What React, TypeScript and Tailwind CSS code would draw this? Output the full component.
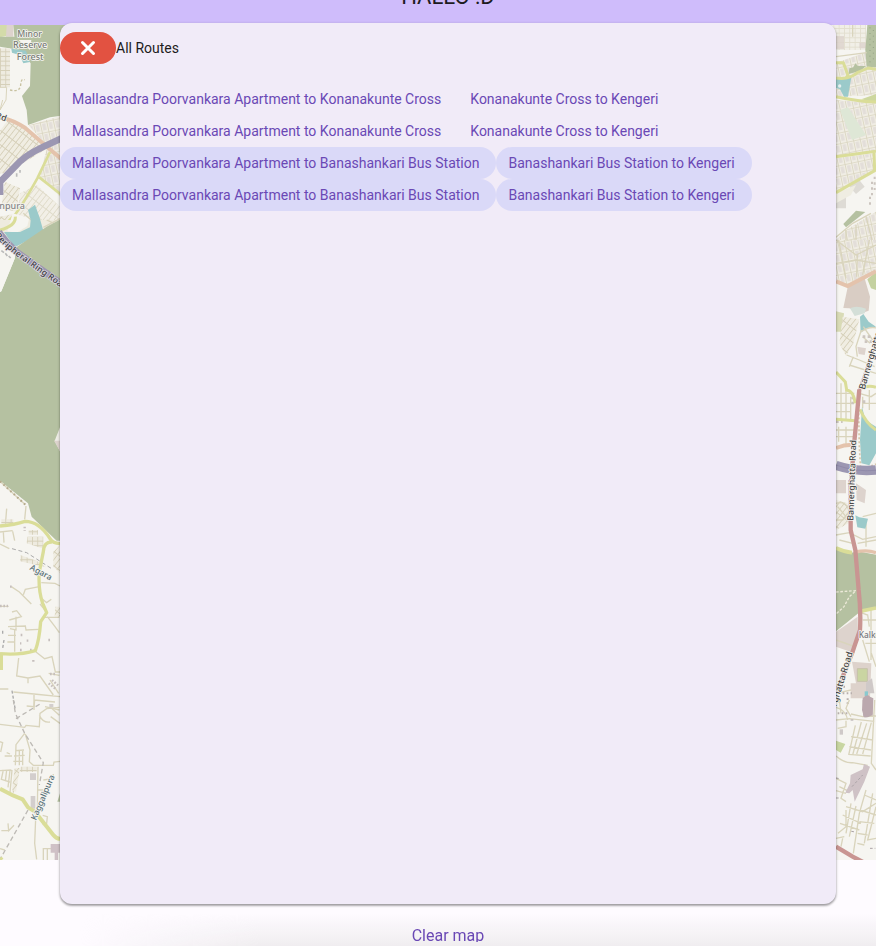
import React from "react";

type Route = { highlighted: boolean; legs: string[] };

const routes: Route[] = [
  { highlighted: false, legs: ["Mallasandra Poorvankara Apartment to Konanakunte Cross", "Konanakunte Cross to Kengeri"] },
  { highlighted: false, legs: ["Mallasandra Poorvankara Apartment to Konanakunte Cross", "Konanakunte Cross to Kengeri"] },
  { highlighted: true, legs: ["Mallasandra Poorvankara Apartment to Banashankari Bus Station", "Banashankari Bus Station to Kengeri"] },
  { highlighted: true, legs: ["Mallasandra Poorvankara Apartment to Banashankari Bus Station", "Banashankari Bus Station to Kengeri"] },
];

const FOREST = "#b5c1a1";
const WATER = "#9bcaca";
const LANE = "#d9d4bc";
const YELLOW = "#dadd98";
const TRUNK = "#c99592";
const MOTORWAY = "#9c97b2";
const SALMON = "#e4c3ac";
const BUILT = "#ddd3cd";

function Label({ x, y, angle = 0, size = 30, color = "#484848", children }: { x: number; y: number; angle?: number; size?: number; color?: string; children: string }) {
  return (
    <text
      transform={`translate(${x} ${y}) rotate(${angle})`}
      fontSize={size}
      fontWeight="500"
      fill={color}
      stroke="#f6f5f1"
      strokeWidth={5}
      strokeLinejoin="round"
      paintOrder="stroke"
      className="font-['Noto_Sans',sans-serif]"
    >
      {children}
    </text>
  );
}

function WestMap() {
  return (
    <>
      <g transform="scale(0.33333)">
        <path d="M0 75H36L20 108 0 112Z" fill="#d3dba9" />
        <path d="M20 75H40V110H18Z" fill={BUILT} />
        <path d="M0 110H44L90 150 100 75H200V345L150 352 84 375 80 330 66 288 90 258 92 190 60 150 0 140Z" fill={FOREST} />
        <path d="M40 75H110V120H44Z" fill={FOREST} />
        <path d="M34 146 78 152 90 186 70 190 58 165 36 158Z" fill={WATER} />
        <path d="M0 145H30V262H0Z" fill="url(#blocksA)" />
        <path d="M0 262H20L18 300 0 330M8 300 0 330" stroke={LANE} strokeWidth="3" fill="none" />
        <path d="M30 270Q60 278 62 255T74 240" stroke="#c8c2a0" strokeWidth="4" strokeDasharray="7 6" fill="none" />
        <path d="M0 392 22 362 76 382 140 446 20 520 0 520Z" fill="url(#blocksB)" />
        <path d="M86 376 180 348V412L138 434Z" fill="url(#blocksC)" />
        <path d="M140 445 180 420V590L120 530Z" fill="url(#blocksC)" />
        <path d="M60 580 110 555 180 620V690H120L50 650Z" fill="url(#blocksB)" opacity=".7" />
        <path d="M14 545 60 565 48 635 4 625ZM0 650 50 640 60 690H0Z" fill="url(#blocksB)" />
        <path d="M50 520v10M60 510v8M0 560h8" stroke="#bbb" strokeWidth="5" />
        <path d="M-5 350Q40 360 76 384L138 438 185 478" stroke={SALMON} strokeWidth="12" fill="none" />
        <path d="M150 456 112 535Q70 610 48 640L0 690M118 532 185 585" stroke={YELLOW} strokeWidth="8" fill="none" />
        <path d="M185 415 130 440Q70 468 45 500L0 546V585" stroke={MOTORWAY} strokeWidth="20" fill="none" />
        <Label x={52} y={110} size={26} color="#777b74">Minor</Label>
        <Label x={39} y={145} size={27} color="#777b74">Reserve</Label>
        <Label x={50} y={181} size={27} color="#777b74">Forest</Label>
        <Label x={-14} y={354} angle={18} size={26}>Rd</Label>
        <Label x={-2} y={628} size={27} color="#858585">npura</Label>
      </g>

      <g transform="translate(0 220) scale(0.33333)">
        <path d="M0 0H180V20L120 50 40 90 0 40Z" fill="#eeebdf" />
        <path d="M38 -20 88 -6 82 18 50 38 22 34Z" fill="#f6f5f1" />
        <path d="M70 -20 98 4M140 0l22 10M120 28l20 12M130 22 180 -4" stroke={LANE} strokeWidth="4" fill="none" />
        <path d="M12 36 60 36 90 22 92 0 84 -30 105 -46 118 -10 130 32 90 58 44 82Z" fill={WATER} />
        <path d="M185 -4 140 20 46 84 44 116 4 214 0 216V782L84 850 95 890 170 962H185Z" fill={FOREST} />
        <path d="M0 60 46 90 44 116 4 214 0 216Z" fill="#f6f5f1" />
        <path d="M180 622 164 662 180 694Z" fill="#efede7" />
        <path d="M180 662H162L180 694Z" fill={BUILT} />
        <path d="M0 30Q48 18 46 -10" stroke={YELLOW} strokeWidth="9" fill="none" />
        <path d="M-4 36Q20 70 50 96L185 192" stroke={MOTORWAY} strokeWidth="20" fill="none" />
        <path d="M4 92l8 6M16 100l6 8M26 108l6 6" stroke="#b9b9b9" strokeWidth="5" />
        <text fontSize="26" fontWeight="600" fill="#4c4a50" stroke="#dedbe3" strokeWidth="4" paintOrder="stroke" className="font-['Noto_Sans',sans-serif]">
          <textPath href="#ringRoad">Peripheral Ring Road</textPath>
        </text>
      </g>

      <g transform="translate(0 480) scale(0.33333)">
        <path d="M0 4 76 74M20 86l-4 50M0 156l38-4M0 192l28 14M10 156l2 32M78 78l-4 40M38 154l6 28" stroke={LANE} strokeWidth="4" fill="none" />
        <path d="M0 4 76 74" stroke="#b5a98a" strokeWidth="6" strokeDasharray="5 9" />
        <path d="M4 118H40V136H4ZM86 150H114V164H86ZM82 170H130V206L80 190ZM62 226 110 242 138 262 60 244Z" fill="url(#blocksA)" />
        <path d="M160 215 180 196V280L160 260ZM166 380H180V410H164Z" fill="url(#blocksB)" />
        <path d="M36 206 80 218 155 266" stroke="#aaa" strokeWidth="3" strokeDasharray="12 8" fill="none" />
        <path d="M34 320 58 336 94 372M70 344 76 328 118 320M124 308 165 310 180 318M126 356 140 368 154 358M0 379H26M24 440 76 438 78 450 116 448M28 420 64 410 50 392 36 396M48 410V450L30 446M44 450V515M24 466H48M22 486H46M134 412H178M142 410 165 440 178 458M120 372 136 392M56 534 50 588 84 594 120 588 160 645M84 594V610M108 516 134 536 156 530 166 576H180M0 627H25M40 636 102 642 180 650M102 645V690M102 660 165 666M150 600 176 640M146 580 178 586M135 680 178 690" stroke={LANE} strokeWidth="4" fill="none" />
        <path d="M30 320h8M145 480h5M80 482h6M60 510h6M60 490h4M62 465h6M90 510h8M100 540v8M130 376h8M0 378h24M74 140v12M156 600l18 16M146 610l20 16M150 582h18" stroke="#c6bfbd" strokeWidth="7" strokeDasharray="5 5" />
        <path d="M8 452v14M12 480 8 505M36 632 46 690" stroke="#aaa" strokeWidth="4" strokeDasharray="9 6" />
        <path d="M0 138Q45 134 75 124 118 124 150 176 158 190 180 191M156 186Q132 184 130 215L118 275Q114 330 128 370L140 398 122 425Q118 480 106 512 60 526 0 521M4 522V570" stroke={YELLOW} strokeWidth="10" fill="none" strokeLinejoin="round" />
        <Label x={88} y={268} angle={28} size={25} color="#567078">Agara</Label>
      </g>

      <g transform="translate(0 700) scale(0.33333)">
        <path d="M0 73 74 82 78 76 118 80 120 40 140 26 178 22M80 18 102 20 104 0M118 46Q130 70 150 66M76 102 90 150 88 185 100 196 160 196 162 186 180 184M74 100 48 134 46 196M46 152 72 150M42 168 74 166M40 184 70 184M58 150V196M68 152V196M0 125 8 128 2 156M14 168H36M20 158 30 162M0 212 34 210M10 210 4 238 30 246M20 210 16 244M30 210 24 262M114 200 112 330M112 270H130M130 240 158 236 160 222M108 332 106 380 104 430 110 478M128 346 142 350 140 370 128 374M24 370 26 392 42 376M4 392 26 392M128 446H154M130 446V480M142 446V480M152 50 180 70M150 20 178 46M0 446 14 450M36 210 30 278M46 210 40 278" stroke={LANE} strokeWidth="4" fill="none" />
        <path d="M62 200H110V216H58Z" fill="url(#blocksA)" />
        <path d="M44 204H60L48 275 36 270Z" fill="url(#blocksB)" />
        <path d="M90 220h18v20H90ZM92 288h14v38H92ZM148 12h12v10h-12Z" fill="#d3cecd" />
        <path d="M40 0 46 40 74 100 130 188 118 255M48 56 120 12M84 330 0 478" stroke="#bdbab5" strokeWidth="4" strokeDasharray="14 9" fill="none" />
        <path d="M0 266Q35 286 68 298L84 322 105 335 160 405Q168 415 180 417M0 474l6 6" stroke={YELLOW} strokeWidth="12" fill="none" />
        <path d="M152 432H180V458H174V480H164V458H152Z" fill="#cfc1c6" />
        <path d="M180 280 172 305H180Z" fill={FOREST} />
        <Label x={108} y={362} angle={-67} size={25} color="#567078">Kaggalipura</Label>
      </g>
    </>
  );
}

function EastMap() {
  return (
    <>
      <g transform="translate(796 0) scale(0.33333)">
        <path d="M112 75H210V150L120 150Z" fill="url(#blocksA)" opacity=".6" />
        <path d="M120 188 215 155 240 205V285L120 290Z" fill="url(#blocksC)" />
        <path d="M120 300 240 310V455L120 468Z" fill="url(#blocksC)" />
        <path d="M120 475 235 460V510L120 575Z" fill="url(#blocksC)" />
        <path d="M120 108H144V148H120ZM190 128H212V145H190Z" fill={BUILT} opacity=".8" />
        <path d="M120 605 150 585V625H120ZM160 560 190 540 206 560 180 582Z" fill="#dedbd5" />
        <path d="M120 580 180 555 165 585 120 610Z" fill="#efede2" />
        <path d="M214 75H240V202L212 200 208 150Z" fill={FOREST} />
        <path d="M222 82v110M232 90v100" stroke="#91a184" strokeWidth="3" strokeDasharray="3 14" />
        <path d="M158 222 160 205 172 202 178 190 186 198 210 198 194 212Z" fill={FOREST} />
        <path d="M120 232H166L156 290H144L132 268 120 264Z" fill={WATER} />
        <circle cx="131" cy="258" r="5" fill="#e6f0ef" />
        <path d="M132 330 156 322 210 405 168 420Z" fill="#dee7d6" />
        <path d="M196 298 240 282V308Z" fill="#cdd79e" />
        <path d="M120 720 150 690 240 635V720Z" fill="url(#blocksC)" />
        <path d="M142 672 180 632 208 636 150 682Z" fill={FOREST} />
        <path d="M120 712 170 670 225 640M180 675V720M150 690V720M210 650 228 720M170 75V110M120 170 212 158" stroke={LANE} strokeWidth="4" fill="none" />
        <path d="M120 188H142L156 226 150 234M120 234Q160 240 184 218L216 204 240 208M120 290Q190 305 240 306M120 470 240 454M234 456 236 512 120 578" stroke={YELLOW} strokeWidth="9" fill="none" strokeLinejoin="round" />
        <path d="M228 545v50M236 530v40M222 590v30" stroke="#ccc5bf" strokeWidth="6" strokeDasharray="7 10" />
      </g>

      <g transform="translate(796 240) scale(0.33333)">
        <path d="M120 0H240V92L155 136 120 120Z" fill="url(#blocksC)" />
        <path d="M120 0 180 45 240 15M184 42 182 110M120 70 180 60 240 70M128 0 150 115M220 0 200 105" stroke={LANE} strokeWidth="4" fill="none" />
        <path d="M240 95 214 118 225 145 240 150Z" fill="#c4d1a0" />
        <path d="M155 142 205 112 222 170 218 212 196 220 160 205 142 204Z" fill="#d9cdc4" />
        <path d="M162 205Q180 195 210 206L206 220 176 228Z" fill="#d4dfd8" />
        <path d="M120 214 144 220 138 275H120Z" fill="#d9dbb6" />
        <path d="M140 230 190 238 172 310 150 348 130 310Z" fill="url(#blocksB)" />
        <path d="M184 320 210 325 206 345 188 342Z" fill={BUILT} />
        <path d="M192 230 202 222 218 245 240 260 214 264 194 278Z" fill={WATER} />
        <path d="M194 276Q220 258 242 264M152 345 190 360 236 380M160 375 240 400M172 350 160 380M196 270 180 320 184 350M202 260 230 300M200 290 222 310M120 460H175M120 490H170M120 515H166M135 430V540M150 450V540M164 470V540M190 460 225 470 240 460M200 470V505M120 570H175M128 560V605M150 560V620M120 590H176M200 490H240M220 450V510" stroke={LANE} strokeWidth="4" fill="none" />
        <path d="M200 290h30M206 305h22M200 485h12M120 545h20M170 470v30" stroke="#ccc5bf" strokeWidth="8" strokeDasharray="8 7" />
        <path d="M198 500 208 540 240 560V640L220 676 196 670 192 600Z" fill={WATER} />
        <path d="M188 520 190 620 194 690 240 672" stroke="#d8c7ac" strokeWidth="5" strokeDasharray="6 6" fill="none" />
        <path d="M120 396 148 426 152 450Q172 452 178 490M120 538 178 542M196 444Q220 434 240 442M192 508Q210 550 240 570" stroke={YELLOW} strokeWidth="9" fill="none" />
        <path d="M120 124 155 138 240 94M120 624Q150 612 180 615" stroke={SALMON} strokeWidth="12" fill="none" />
        <path d="M120 676Q180 696 240 690" stroke={MOTORWAY} strokeWidth="28" fill="none" />
        <path d="M120 675Q180 697 240 691" stroke="#8983a4" strokeWidth="2" fill="none" />
        <path d="M190 448 174 615 164 740" stroke={TRUNK} strokeWidth="13" fill="none" />
        <path d="M245 290 190 450" stroke={TRUNK} strokeWidth="8" fill="none" />
        <Label x={206} y={450} angle={-74} size={27}>Bannerghatta</Label>
      </g>

      <g transform="translate(796 480) scale(0.33333)">
        <path d="M120 60 155 70 158 130 120 150Z" fill="url(#blocksB)" />
        <path d="M180 10 210 30 206 70 182 60ZM120 0H150V40H120Z" fill={BUILT} />
        <path d="M120 70Q155 60 160 100L140 120H120M125 80 150 110M200 110 240 100M120 165 160 158 200 178 240 170M185 190 240 180M210 130V200M130 180 170 190" stroke={LANE} strokeWidth="4" fill="none" />
        <path d="M178 106 190 112 216 116 208 146 184 142Z" fill={WATER} />
        <path d="M120 202 160 220 185 214 240 224V388L196 392 120 454Z" fill={FOREST} />
        <path d="M120 336 180 332 160 350 144 380 120 402" stroke="#ece9d8" strokeWidth="4" strokeDasharray="8 5" fill="none" />
        <path d="M150 435 185 410 186 470 176 520 120 500V455Z" fill={BUILT} />
        <path d="M168 545 226 550 222 655 164 655V610H180Z" fill="#ddd2cb" />
        <path d="M184 566H214V604H184Z" fill="#cad5a2" stroke="#c6c1aa" strokeWidth="3" />
        <path d="M120 480Q150 490 175 500M195 398 215 405 220 440M200 420H240M225 390V540M208 490H240M226 520 240 560M120 682Q150 690 155 720M200 480 220 545M120 640 165 630" stroke={LANE} strokeWidth="4" fill="none" />
        <path d="M130 620h20M140 640h28M155 655v20M125 700h30" stroke="#b8b0ad" strokeWidth="6" strokeDasharray="5 7" />
        <path d="M120 204Q145 216 168 218M192 394 240 384" stroke={YELLOW} strokeWidth="11" fill="none" />
        <path d="M178 216Q215 208 240 218" stroke={SALMON} strokeWidth="10" fill="none" />
        <path d="M164 0V150L178 210 188 330Q195 390 192 450L168 520 120 640" stroke={TRUNK} strokeWidth="13" fill="none" />
        <path d="M210 608 228 595 235 640H210Z" fill="#cfc9c8" />
        <path d="M206 634h10v14h-10Z" fill="#89c9cf" />
        <path d="M200 655Q214 640 222 650L232 655 230 710 204 712 198 690Z" fill="#bba8ae" />
        <Label x={172} y={122} angle={-88} size={26}>Bannerghatta Road</Label>
        <Label x={188} y={474} size={25} color="#77777d">Kalkere</Label>
        <Label x={121} y={680} angle={-73} size={27}>rghatta Road</Label>
      </g>

      <g transform="translate(796 700) scale(0.33333)">
        <path d="M120 122 148 132 134 158 120 150Z" fill="#c8d6a1" />
        <path d="M120 60 160 56 235 64M160 0 150 25 165 50M130 0 135 40M165 42 200 50 240 48M150 62V80L125 85M178 76 158 165M196 66 170 165M212 70 182 162M226 68 200 162M165 110 230 120M160 140 225 150M158 163 224 168M236 0 226 190 240 210M120 168Q145 190 170 188L215 196M120 235 150 250 135 295 150 305M130 260 160 275M120 272 150 280M150 320 200 335 240 310M140 345 195 370M132 370 190 390M126 400 150 380V330M165 310 150 400M180 318 160 410M210 270 190 340 172 460M230 280 205 430M240 320 215 420 240 415M120 415 145 410M140 415 135 440M192 330 240 345M190 365 235 370M185 400 215 405M205 285 240 300M184 430 205 435" stroke={LANE} strokeWidth="4" fill="none" />
        <path d="M131 88h10v16h-10Z" fill="#cfc9c8" />
        <path d="M200 0H229V40Q222 56 202 50Z" fill="#bba8ae" />
        <path d="M164 225 200 208 204 192 222 200 205 245 176 305 170 270 160 280 148 278 162 250Z" fill="#cfc2c6" />
        <path d="M168 260 200 225M120 234l12 2M164 60h12M166 394l12 2M222 445h16M120 294h10" stroke="#aaa2a5" strokeWidth="3" strokeDasharray="8 6" />
        <path d="M120 440 170 470 205 488" stroke={TRUNK} strokeWidth="13" fill="none" />
      </g>
    </>
  );
}

function RouteMap() {
  return (
    <svg role="img" aria-label="Map" viewBox="0 25 876 835" preserveAspectRatio="none" className="block h-full w-full bg-[#f6f5f1]">
      <defs>
        <pattern id="blocksA" width="16" height="14" patternUnits="userSpaceOnUse">
          <path d="M0 0H16V14H0Z" fill="#eeebe0" />
          <path d="M0 1H16M1 0V14" stroke="#d5cfb8" strokeWidth="3" />
        </pattern>
        <pattern id="blocksB" width="13" height="34" patternUnits="userSpaceOnUse" patternTransform="rotate(38)">
          <path d="M0 0H13V34H0Z" fill="#f0ede2" />
          <path d="M0 1H13M1 0V34" stroke="#d5cfb8" strokeWidth="3" />
        </pattern>
        <pattern id="blocksC" width="20" height="32" patternUnits="userSpaceOnUse" patternTransform="rotate(-12)">
          <path d="M0 0H20V32H0Z" fill="#f0ede4" />
          <path d="M6 6H16V26H6Z" fill="#e3ded9" />
          <path d="M0 1H20M1 0V32" stroke="#dad5c0" strokeWidth="3" />
        </pattern>
        <path id="ringRoad" d="M-16 48Q14 82 48 107L260 258" />
      </defs>
      <WestMap />
      <EastMap />
    </svg>
  );
}

function RouteRow({ route }: { route: Route }) {
  return (
    <li className="flex">
      {route.legs.map((leg) => (
        <button
          key={leg}
          type="button"
          className={`h-8 rounded-full pr-[17px] pl-3 text-left text-sm whitespace-nowrap text-[#6a48b5] ${route.highlighted ? "bg-[#dad9f8]" : ""}`}
        >
          {leg}
        </button>
      ))}
    </li>
  );
}

export default function App() {
  return (
    <div className="relative flex h-screen flex-col overflow-hidden bg-[#fefbff] font-[Roboto,sans-serif]">
      <header className="flex h-[25px] shrink-0 items-end justify-center bg-[#cfbcfb] pb-[14px] pl-5">
        <h1 className="text-[22px] leading-7 text-[#1d1b20]">HALLO :D</h1>
      </header>

      <main className="min-h-0 flex-1">
        <RouteMap />
      </main>

      <footer className="flex h-[86px] shrink-0 flex-col justify-end">
        <div className="flex h-8 justify-center bg-linear-to-b from-transparent to-[#f0edf0] mask-[linear-gradient(to_right,transparent_80px,black_260px)] pl-5">
          <button type="button" className="h-7 overflow-hidden pt-[10px] text-base leading-6 text-[#6a48b5]">
            Clear map
          </button>
        </div>
      </footer>

      <section
        role="dialog"
        aria-labelledby="routes-title"
        className="absolute top-[23px] right-10 bottom-[42px] left-[60px] rounded-xl bg-[#f1ebf8] pt-[9px] shadow-[0_1px_3px_rgba(0,0,0,0.3),0_2px_2px_rgba(0,0,0,0.2)]"
      >
        <div className="flex items-center">
          <button type="button" aria-label="Close" className="flex h-8 w-14 items-center justify-center rounded-full bg-[#e25241]">
            <svg viewBox="0 0 16 16" className="size-4" fill="none" stroke="white" strokeWidth="3" strokeLinecap="round">
              <path d="M2.5 2.5 13.5 13.5M13.5 2.5 2.5 13.5" />
            </svg>
          </button>
          <h2 id="routes-title" className="text-sm text-[#1d1b20]">
            All Routes
          </h2>
        </div>
        <ul className="mt-[19px]">
          {routes.map((route, i) => (
            <RouteRow key={i} route={route} />
          ))}
        </ul>
      </section>
    </div>
  );
}
